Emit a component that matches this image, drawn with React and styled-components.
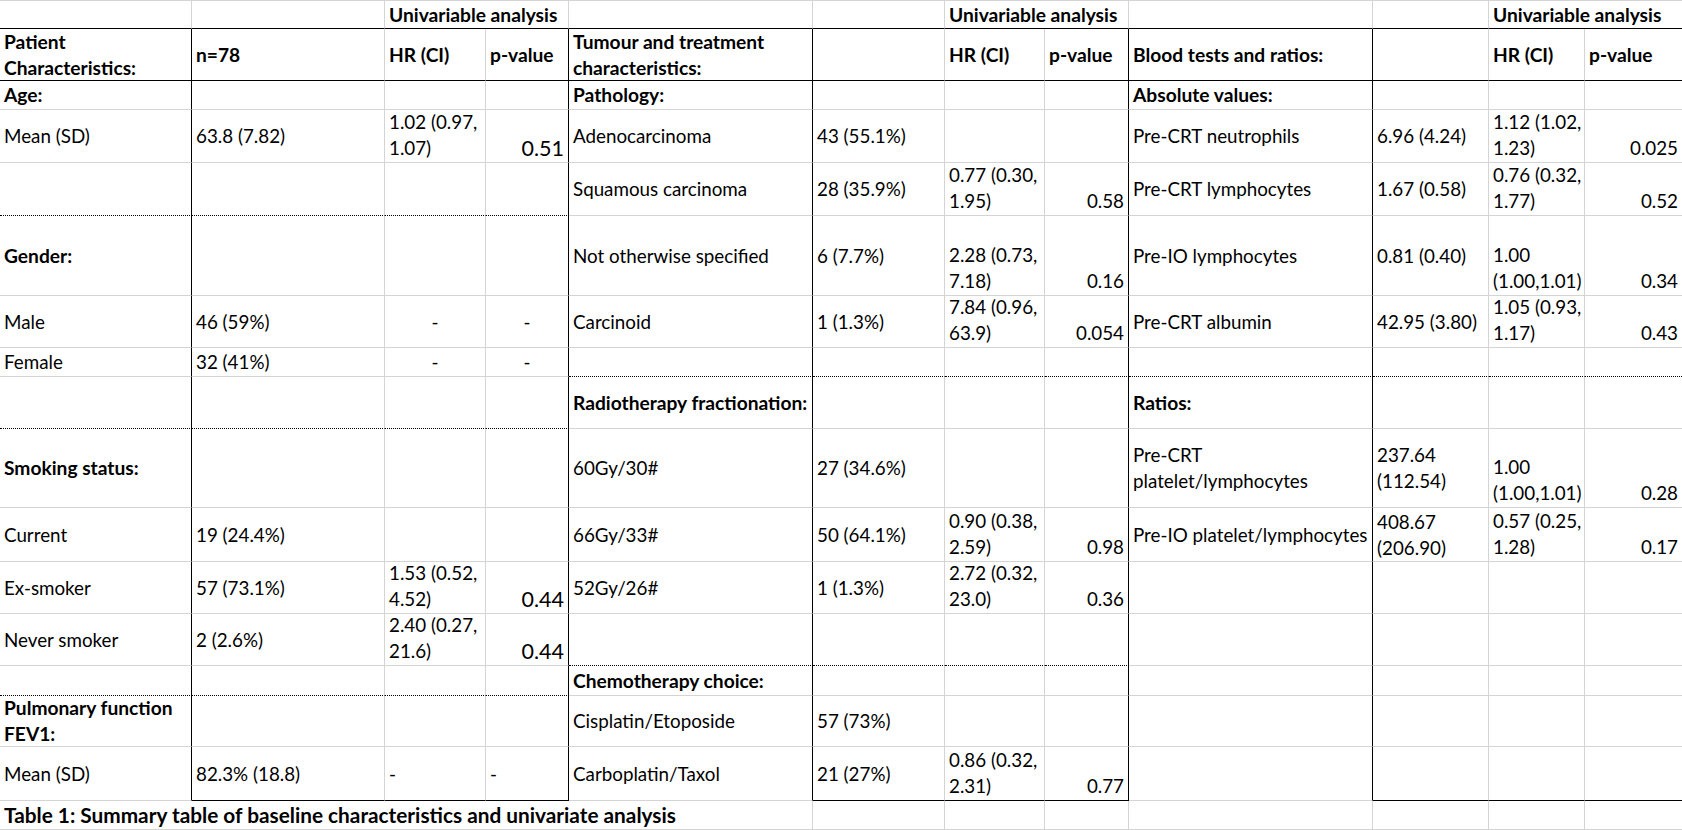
import React from 'react'
import styled, { createGlobalStyle, css } from 'styled-components'

const GRID = '#d4d4d4'
const COLS = [192, 193, 101, 83, 244, 132, 100, 84, 244, 116, 96, 97]
const ROWS = [28, 52, 29, 53, 53, 80, 52, 29, 52, 79, 54, 52, 52, 30, 51, 54, 29]

const GlobalStyle = createGlobalStyle`
    html, body {
        margin: 0;
        padding: 0;
        background: #fff;
    }
    body {
        font-family: Lato, "Liberation Sans", sans-serif;
        color: #000;
    }
`

const edge = kind => {
    if (kind === 'solid') return '1px solid #000'
    if (kind === 'dotted') return '1px dotted #000'
    if (kind === 'none') return 'none'
    return `1px solid ${GRID}`
}

const Sheet = styled.div`
    display: grid;
    grid-template-columns: ${COLS.map(w => `${w}px`).join(' ')};
    grid-template-rows: ${ROWS.map(h => `${h}px`).join(' ')};
    width: 1682px;
    height: 830px;
    border-top: 1px solid ${GRID};
    box-sizing: border-box;
    overflow: hidden;
`

const Cell = styled.div`
    grid-column: span ${p => p.$span};
    box-sizing: border-box;
    min-width: 0;
    display: flex;
    flex-direction: column;
    justify-content: ${p => (p.$valign === 'bottom' ? 'flex-end' : 'center')};
    align-items: ${p => (p.$align === 'right' ? 'flex-end' : p.$align === 'center' ? 'center' : 'flex-start')};
    padding: 0 4px ${p => (p.$valign === 'bottom' ? '1px' : '0')} 4px;
    border-right: ${p => edge(p.$right)};
    border-bottom: ${p => edge(p.$bottom)};
    font-size: 18.8px;
    line-height: 26px;
    font-weight: 400;
    white-space: nowrap;
    ${p => p.$bold && css`
        font-size: 19.2px;
        font-weight: 700;
    `}
    ${p => p.$big && css`
        font-size: 21.5px;
    `}
    ${p => p.$caption && css`
        font-size: 20.8px;
        font-weight: 700;
    `}
`

const Line = styled.span`
    display: block;
`

// column kinds inside each section: label, value, hazard ratio, p-value
const KIND_DEFAULTS = [
    { a: 'left', v: 'middle' },
    { a: 'left', v: 'middle' },
    { a: 'left', v: 'bottom' },
    { a: 'right', v: 'bottom' },
]

const B = t => ({ t, b: true, a: 'left' })
const BIG = t => ({ t, big: true })
const MID = t => ({ t, a: 'center', v: 'middle' })
const LEFT = t => ({ t, a: 'left', v: 'middle' })
const UA = { t: 'Univariable analysis', b: true, span: 2, a: 'left', v: 'middle' }
const E4 = ['', '', '', '']

const rows = [
    ['', '', UA, '', '', UA, '', '', UA],
    [
        B('Patient\nCharacteristics:'), B('n=78'), B('HR (CI)'), B('p-value'),
        B('Tumour and treatment\ncharacteristics:'), '', B('HR (CI)'), B('p-value'),
        B('Blood tests and ratios:'), '', B('HR (CI)'), B('p-value'),
    ],
    [B('Age:'), '', '', '', B('Pathology:'), '', '', '', B('Absolute values:'), '', '', ''],
    [
        'Mean (SD)', '63.8 (7.82)', '1.02 (0.97,\n1.07)', BIG('0.51'),
        'Adenocarcinoma', '43 (55.1%)', '', '',
        'Pre-CRT neutrophils', '6.96 (4.24)', '1.12 (1.02,\n1.23)', '0.025',
    ],
    [
        ...E4,
        'Squamous carcinoma', '28 (35.9%)', '0.77 (0.30,\n1.95)', '0.58',
        'Pre-CRT lymphocytes', '1.67 (0.58)', '0.76 (0.32,\n1.77)', '0.52',
    ],
    [
        B('Gender:'), '', '', '',
        'Not otherwise specified', '6 (7.7%)', '2.28 (0.73,\n7.18)', '0.16',
        'Pre-IO lymphocytes', '0.81 (0.40)', '1.00\n(1.00,1.01)', '0.34',
    ],
    [
        'Male', '46 (59%)', MID('-'), MID('-'),
        'Carcinoid', '1 (1.3%)', '7.84 (0.96,\n63.9)', '0.054',
        'Pre-CRT albumin', '42.95 (3.80)', '1.05 (0.93,\n1.17)', '0.43',
    ],
    ['Female', '32 (41%)', MID('-'), MID('-'), ...E4, ...E4],
    [...E4, B('Radiotherapy fractionation:'), '', '', '', B('Ratios:'), '', '', ''],
    [
        B('Smoking status:'), '', '', '',
        '60Gy/30#', '27 (34.6%)', '', '',
        'Pre-CRT\nplatelet/lymphocytes', '237.64\n(112.54)', '1.00\n(1.00,1.01)', '0.28',
    ],
    [
        'Current', '19 (24.4%)', '', '',
        '66Gy/33#', '50 (64.1%)', '0.90 (0.38,\n2.59)', '0.98',
        'Pre-IO platelet/lymphocytes', '408.67\n(206.90)', '0.57 (0.25,\n1.28)', '0.17',
    ],
    [
        'Ex-smoker', '57 (73.1%)', '1.53 (0.52,\n4.52)', BIG('0.44'),
        '52Gy/26#', '1 (1.3%)', '2.72 (0.32,\n23.0)', '0.36',
        ...E4,
    ],
    ['Never smoker', '2 (2.6%)', '2.40 (0.27,\n21.6)', BIG('0.44'), ...E4, ...E4],
    [...E4, B('Chemotherapy choice:'), '', '', '', ...E4],
    [B('Pulmonary function\nFEV1:'), '', '', '', 'Cisplatin/Etoposide', '57 (73%)', '', '', ...E4],
    [
        'Mean (SD)', '82.3% (18.8)', LEFT('-'), LEFT('-'),
        'Carboplatin/Taxol', '21 (27%)', '0.86 (0.32,\n2.31)', '0.77',
        ...E4,
    ],
    [
        { t: 'Table 1: Summary table of baseline characteristics and univariate analysis', caption: true, span: 5 },
        '', '', '', '', '', '', '',
    ],
]

const THICK_RIGHT = [0, 3, 4, 7, 8]
const FOOT_GRID = [0, 4, 8]

const rightKind = (r, c) => {
    if (c === 11) return 'none'
    if (r === 0 || r === 16) return 'grid'
    return THICK_RIGHT.includes(c) ? 'solid' : 'grid'
}

const bottomKind = (r, c) => {
    if (r === 0 || r === 1) return 'solid'
    if (r === 15) return FOOT_GRID.includes(c) ? 'grid' : 'solid'
    const s = Math.floor(c / 4)
    const dotted =
        (r === 4 && s === 0) ||
        (r === 7 && s > 0) ||
        (r === 8 && s === 0) ||
        (r === 12 && s === 1) ||
        (r === 13 && s === 0)
    return dotted ? 'dotted' : 'grid'
}

const App = () => (
    <>
        <GlobalStyle />
        <Sheet>
            {rows.map((row, r) => {
                let c = 0
                return row.map((raw, i) => {
                    const cell = typeof raw === 'string' ? { t: raw } : raw
                    const span = cell.span || 1
                    const start = c
                    const end = c + span - 1
                    c += span
                    const base = KIND_DEFAULTS[start % 4]
                    const header = r <= 1
                    return (
                        <Cell
                            key={`${r}-${i}`}
                            $span={span}
                            $align={cell.a || base.a}
                            $valign={cell.v || (header ? 'middle' : base.v)}
                            $bold={cell.b}
                            $big={cell.big}
                            $caption={cell.caption}
                            $right={rightKind(r, end)}
                            $bottom={bottomKind(r, start)}
                        >
                            {cell.t && cell.t.split('\n').map((l, k) => <Line key={k}>{l}</Line>)}
                        </Cell>
                    )
                })
            })}
        </Sheet>
    </>
)

export default App
